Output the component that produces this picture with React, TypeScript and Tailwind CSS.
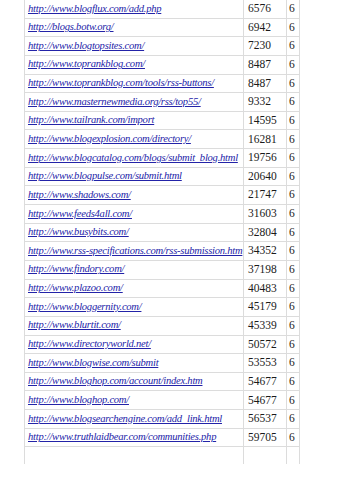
import React from "react";

const rows: [string, string][] = [
  ["http://www.blogflux.com/add.php", "6576"],
  ["http://blogs.botw.org/", "6942"],
  ["http://www.blogtopsites.com/", "7230"],
  ["http://www.toprankblog.com/", "8487"],
  ["http://www.toprankblog.com/tools/rss-buttons/", "8487"],
  ["http://www.masternewmedia.org/rss/top55/", "9332"],
  ["http://www.tailrank.com/import", "14595"],
  ["http://www.blogexplosion.com/directory/", "16281"],
  ["http://www.blogcatalog.com/blogs/submit_blog.html", "19756"],
  ["http://www.blogpulse.com/submit.html", "20640"],
  ["http://www.shadows.com/", "21747"],
  ["http://www.feeds4all.com/", "31603"],
  ["http://www.busybits.com/", "32804"],
  ["http://www.rss-specifications.com/rss-submission.htm", "34352"],
  ["http://www.findory.com/", "37198"],
  ["http://www.plazoo.com/", "40483"],
  ["http://www.bloggernity.com/", "45179"],
  ["http://www.blurtit.com/", "45339"],
  ["http://www.directoryworld.net/", "50572"],
  ["http://www.blogwise.com/submit", "53553"],
  ["http://www.bloghop.com/account/index.htm", "54677"],
  ["http://www.bloghop.com/", "54677"],
  ["http://www.blogsearchengine.com/add_link.html", "56537"],
  ["http://www.truthlaidbear.com/communities.php", "59705"],
];

const serif = { fontFamily: '"Liberation Serif", "Times New Roman", serif' };

export default function App() {
  return (
    <div className="w-[339px] h-[480px] bg-white overflow-hidden pl-[24px]">
      <div className="flex flex-col w-[276px] border-l border-r border-[#dcdcdc]">
        {rows.map(([url, n], i) => (
          <div key={i} className="flex h-[18.65px] border-b border-[#dcdcdc]">
            <div className="w-[218px] shrink-0 pl-[3px] flex items-center overflow-hidden whitespace-nowrap">
              <a
                href="#"
                className="italic underline text-[#2323a8] text-[10.6px] leading-none tracking-[-0.26px]"
                style={serif}
              >
                {url}
              </a>
            </div>
            <div
              className="w-[43px] shrink-0 border-l border-[#dcdcdc] pl-[4px] flex items-center text-[11.5px] text-[#1a1a1a] leading-none"
              style={serif}
            >
              {n}
            </div>
            <div
              className="flex-1 border-l border-[#dcdcdc] pl-[2px] flex items-center text-[11.5px] text-[#1a1a1a] leading-none"
              style={serif}
            >
              6
            </div>
          </div>
        ))}
        <div className="flex h-[17px]">
          <div className="w-[218px] shrink-0" />
          <div className="w-[43px] shrink-0 border-l border-[#dcdcdc]" />
          <div className="flex-1 border-l border-[#dcdcdc]" />
        </div>
      </div>
    </div>
  );
}
